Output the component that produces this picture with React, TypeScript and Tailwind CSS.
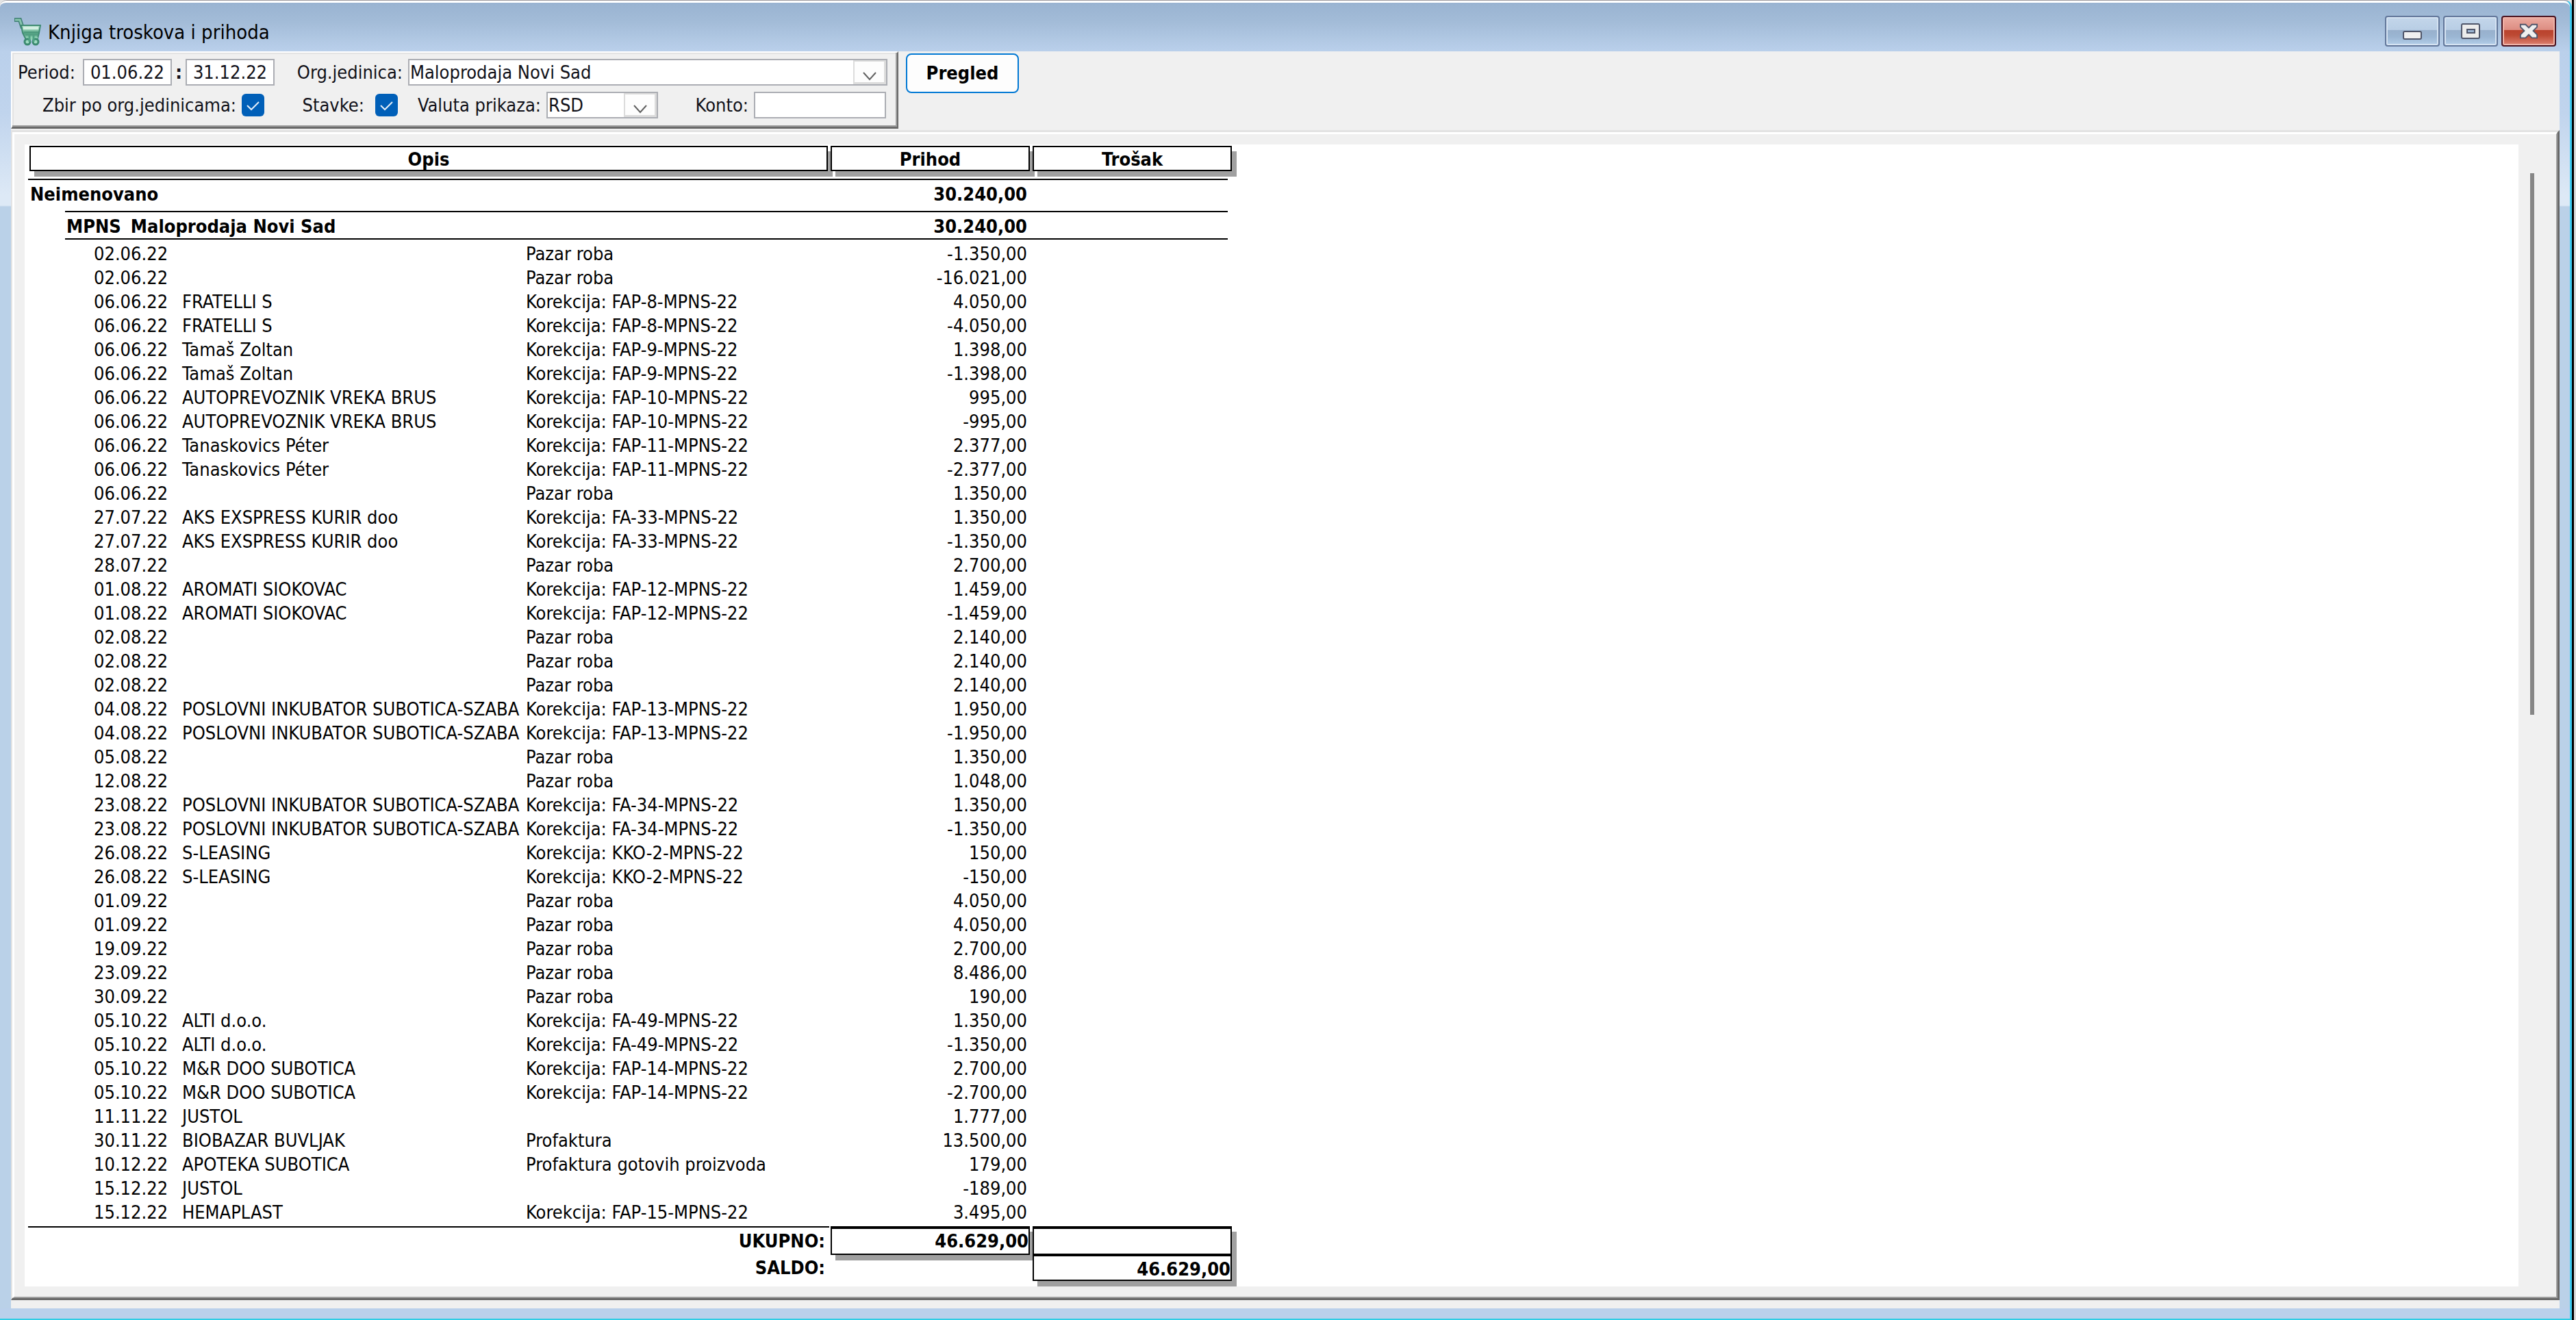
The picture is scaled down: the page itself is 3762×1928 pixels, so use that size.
import { ReactNode } from "react";

type Entry = [date: string, name: string, note: string, income: string];

const entries: Entry[] = [
  ["02.06.22", "", "Pazar roba", "-1.350,00"],
  ["02.06.22", "", "Pazar roba", "-16.021,00"],
  ["06.06.22", "FRATELLI S", "Korekcija: FAP-8-MPNS-22", "4.050,00"],
  ["06.06.22", "FRATELLI S", "Korekcija: FAP-8-MPNS-22", "-4.050,00"],
  ["06.06.22", "Tamaš Zoltan", "Korekcija: FAP-9-MPNS-22", "1.398,00"],
  ["06.06.22", "Tamaš Zoltan", "Korekcija: FAP-9-MPNS-22", "-1.398,00"],
  ["06.06.22", "AUTOPREVOZNIK VREKA BRUS", "Korekcija: FAP-10-MPNS-22", "995,00"],
  ["06.06.22", "AUTOPREVOZNIK VREKA BRUS", "Korekcija: FAP-10-MPNS-22", "-995,00"],
  ["06.06.22", "Tanaskovics Péter", "Korekcija: FAP-11-MPNS-22", "2.377,00"],
  ["06.06.22", "Tanaskovics Péter", "Korekcija: FAP-11-MPNS-22", "-2.377,00"],
  ["06.06.22", "", "Pazar roba", "1.350,00"],
  ["27.07.22", "AKS EXSPRESS KURIR doo", "Korekcija: FA-33-MPNS-22", "1.350,00"],
  ["27.07.22", "AKS EXSPRESS KURIR doo", "Korekcija: FA-33-MPNS-22", "-1.350,00"],
  ["28.07.22", "", "Pazar roba", "2.700,00"],
  ["01.08.22", "AROMATI SIOKOVAC", "Korekcija: FAP-12-MPNS-22", "1.459,00"],
  ["01.08.22", "AROMATI SIOKOVAC", "Korekcija: FAP-12-MPNS-22", "-1.459,00"],
  ["02.08.22", "", "Pazar roba", "2.140,00"],
  ["02.08.22", "", "Pazar roba", "2.140,00"],
  ["02.08.22", "", "Pazar roba", "2.140,00"],
  ["04.08.22", "POSLOVNI INKUBATOR SUBOTICA-SZABA", "Korekcija: FAP-13-MPNS-22", "1.950,00"],
  ["04.08.22", "POSLOVNI INKUBATOR SUBOTICA-SZABA", "Korekcija: FAP-13-MPNS-22", "-1.950,00"],
  ["05.08.22", "", "Pazar roba", "1.350,00"],
  ["12.08.22", "", "Pazar roba", "1.048,00"],
  ["23.08.22", "POSLOVNI INKUBATOR SUBOTICA-SZABA", "Korekcija: FA-34-MPNS-22", "1.350,00"],
  ["23.08.22", "POSLOVNI INKUBATOR SUBOTICA-SZABA", "Korekcija: FA-34-MPNS-22", "-1.350,00"],
  ["26.08.22", "S-LEASING", "Korekcija: KKO-2-MPNS-22", "150,00"],
  ["26.08.22", "S-LEASING", "Korekcija: KKO-2-MPNS-22", "-150,00"],
  ["01.09.22", "", "Pazar roba", "4.050,00"],
  ["01.09.22", "", "Pazar roba", "4.050,00"],
  ["19.09.22", "", "Pazar roba", "2.700,00"],
  ["23.09.22", "", "Pazar roba", "8.486,00"],
  ["30.09.22", "", "Pazar roba", "190,00"],
  ["05.10.22", "ALTI d.o.o.", "Korekcija: FA-49-MPNS-22", "1.350,00"],
  ["05.10.22", "ALTI d.o.o.", "Korekcija: FA-49-MPNS-22", "-1.350,00"],
  ["05.10.22", "M&R DOO SUBOTICA", "Korekcija: FAP-14-MPNS-22", "2.700,00"],
  ["05.10.22", "M&R DOO SUBOTICA", "Korekcija: FAP-14-MPNS-22", "-2.700,00"],
  ["11.11.22", "JUSTOL", "", "1.777,00"],
  ["30.11.22", "BIOBAZAR BUVLJAK", "Profaktura", "13.500,00"],
  ["10.12.22", "APOTEKA SUBOTICA", "Profaktura gotovih proizvoda", "179,00"],
  ["15.12.22", "JUSTOL", "", "-189,00"],
  ["15.12.22", "HEMAPLAST", "Korekcija: FAP-15-MPNS-22", "3.495,00"],
];

function CartIcon() {
  return (
    <svg width="40" height="42" viewBox="0 0 40 42" aria-hidden="true">
      <defs>
        <linearGradient id="cart" x1="0" y1="0" x2="0" y2="1">
          <stop offset="0" stopColor="#b9e3cf" />
          <stop offset="0.35" stopColor="#8cc9ae" />
          <stop offset="0.6" stopColor="#4f9f80" />
          <stop offset="1" stopColor="#93d3b5" />
        </linearGradient>
      </defs>
      <path d="M1 4h8l4 12" fill="none" stroke="#3f7f74" strokeWidth="6" />
      <path d="M2 4h7l4 12" fill="none" stroke="#86c3ac" strokeWidth="3" />
      <path d="M11 12h28l-2 11-2 8H17l-4-8z" fill="url(#cart)" stroke="#3f8a72" strokeWidth="2" />
      <path d="M14 16h22" stroke="#d3efe2" strokeWidth="4" />
      <path d="M15 22h21M17 26h18" stroke="#3f8a70" strokeWidth="1" />
      <path d="M18 29h17v4H18z" fill="#8fd2b3" />
      <circle cx="20" cy="36" r="4" fill="#9fdcc2" stroke="#3b8a70" strokeWidth="3" />
      <circle cx="32" cy="36" r="4" fill="#9fdcc2" stroke="#3b8a70" strokeWidth="3" />
      <path d="M23 27v9M29 27v9" stroke="#4fa283" strokeWidth="3" />
    </svg>
  );
}

const captionBlue =
  "flex h-[45px] w-20 items-center justify-center rounded-[4px] border-2 border-[#62779a] bg-[linear-gradient(#c3d6ea_0%,#b9cee5_45%,#98b0cc_46%,#9bb6d3_70%,#b3cee9_100%)] shadow-[inset_0_0_0_2px_#d5e3f2]";

function CaptionButtons() {
  return (
    <div className="flex gap-[5px]">
      <button type="button" aria-label="Minimize" className={captionBlue}>
        <svg width="28" height="26" viewBox="0 0 28 26">
          <rect x="1" y="13" width="26" height="11" rx="2" fill="#f0f0f0" stroke="#50566a" strokeWidth="2" />
        </svg>
      </button>
      <button type="button" aria-label="Maximize" className={captionBlue}>
        <svg width="28" height="26" viewBox="0 0 28 26">
          <rect x="1" y="2" width="26" height="21" rx="2" fill="#ececec" stroke="#50566a" strokeWidth="2" />
          <rect x="9" y="10" width="11" height="5" fill="#9bb4d2" stroke="#50566a" strokeWidth="2" />
        </svg>
      </button>
      <button
        type="button"
        aria-label="Close"
        className="flex h-[45px] w-20 items-center justify-center rounded-[4px] border-2 border-[#4a1320] bg-[linear-gradient(#ebaba1_0%,#dd8d82_45%,#b9412c_46%,#bd4a34_65%,#dd8272_100%)] shadow-[inset_0_0_0_2px_#eeb3a8]"
      >
        <svg width="28" height="26" viewBox="0 0 30 26">
          <path
            d="M2 2h8l5 5 5-5h8v4l-6 6 6 6v5h-8l-5-5-5 5H2v-5l6-6-6-6z"
            fill="#efefef"
            stroke="#50566a"
            strokeWidth="2"
          />
        </svg>
      </button>
    </div>
  );
}

function Combo({ id, value, className }: { id: string; value: string; className: string }) {
  return (
    <div className={`relative h-[39px] ${className}`}>
      <select
        id={id}
        className="h-full w-full appearance-none border-2 border-[#abadb3] bg-white pl-px leading-8"
        defaultValue={value}
      >
        <option>{value}</option>
      </select>
      <span className="pointer-events-none absolute inset-y-[2px] right-[2px] flex w-12 items-end justify-center border-2 border-r-[3px] border-b-[3px] border-[#dcdcdc] bg-[#fdfdfd] pb-[2px]">
        <svg width="20" height="13" viewBox="0 0 20 13" fill="none" stroke="#606060" strokeWidth="2">
          <path d="M1 1l9 10 9-10" />
        </svg>
      </span>
    </div>
  );
}

function Tick({ id }: { id: string }) {
  return (
    <span className="relative h-[33px] w-[33px]">
      <input id={id} type="checkbox" defaultChecked className="block h-full w-full appearance-none rounded-[6px] bg-[#005fb8]" />
      <svg
        className="pointer-events-none absolute inset-0"
        width="33"
        height="33"
        viewBox="0 0 33 33"
        fill="none"
        stroke="#e4eef8"
        strokeWidth="2"
      >
        <path d="M8 17l6 6L25 12" />
      </svg>
    </span>
  );
}

const field = "h-[39px] border-2 border-[#abadb3] bg-white";

function Filters() {
  return (
    <form className="flex w-[1296px] flex-col gap-[9px] border-t-2 border-r-2 border-b-[3px] border-l-2 border-t-white border-r-[#696969] border-b-[#696969] border-l-white pt-[9px] pb-3 pl-2 text-[#101018] shadow-[inset_-2px_-2px_0_#a0a0a0,inset_2px_2px_0_#e3e3e3]">
      <div className="flex items-center">
        <label htmlFor="from" className="w-[95px]">
          Period:
        </label>
        <input id="from" defaultValue="01.06.22" className={`${field} w-[130px] text-center`} />
        <label htmlFor="to" aria-label="Period do" className="w-5 text-center font-bold">
          :
        </label>
        <input id="to" defaultValue="31.12.22" className={`${field} w-[130px] text-center`} />
        <label htmlFor="unit" className="w-[195px] pr-2 text-right">
          Org.jedinica:
        </label>
        <Combo id="unit" value="Maloprodaja Novi Sad" className="w-[700px]" />
      </div>
      <div className="flex items-center">
        <label htmlFor="sum" className="w-[327px] pr-2 text-right">
          Zbir po org.jedinicama:
        </label>
        <Tick id="sum" />
        <label htmlFor="items" className="w-[162px] pr-4 text-right">
          Stavke:
        </label>
        <Tick id="items" />
        <label htmlFor="currency" className="w-[217px] pr-2 text-right">
          Valuta prikaza:
        </label>
        <Combo id="currency" value="RSD" className="w-[163px]" />
        <label htmlFor="account" className="w-[140px] pr-2 text-right">
          Konto:
        </label>
        <input id="account" className={`${field} w-[193px]`} />
      </div>
    </form>
  );
}

function Box({ children, className = "" }: { children?: ReactNode; className?: string }) {
  return (
    <div className={`mx-[2px] border-2 border-black bg-white shadow-[7px_8px_0_#a0a0a0] ${className}`}>{children}</div>
  );
}

function Ledger() {
  return (
    <table className="w-[1760px] table-fixed border-collapse text-left text-black">
      <colgroup>
        <col className="w-[225px]" />
        <col className="w-[502px]" />
        <col className="w-[443px]" />
        <col className="w-[295px]" />
        <col className="w-[295px]" />
      </colgroup>
      <thead>
        <tr className="h-[50px] align-top">
          <th colSpan={3} className="pt-[2px] text-center">
            <Box className="h-[37px] leading-9">Opis</Box>
          </th>
          <th className="pt-[2px] text-center">
            <Box className="h-[37px] leading-9">Prihod</Box>
          </th>
          <th className="pt-[2px] text-center">
            <Box className="h-[37px] leading-9">Trošak</Box>
          </th>
        </tr>
      </thead>
      <tbody>
        <tr className="h-[47px] align-top font-bold">
          <td colSpan={3}>
            <div className="h-[47px] border-t-2 border-black pl-[3px] leading-[42px]">Neimenovano</div>
          </td>
          <td>
            <div className="h-[47px] border-t-2 border-black pr-[6px] text-right leading-[42px]">30.240,00</div>
          </td>
          <td>
            <div className="mr-2 h-[47px] border-t-2 border-black" />
          </td>
        </tr>
        <tr className="h-[45px] align-top font-bold">
          <td colSpan={3}>
            <div className="ml-[54px] flex h-[42px] gap-[14px] border-y-2 border-black pl-[2px] leading-[41px]">
              <span>MPNS</span>
              <span>Maloprodaja Novi Sad</span>
            </div>
          </td>
          <td>
            <div className="h-[42px] border-y-2 border-black pr-[6px] text-right leading-[41px]">30.240,00</div>
          </td>
          <td>
            <div className="mr-2 h-[42px] border-y-2 border-black" />
          </td>
        </tr>
        {entries.map(([date, name, note, income], i) => (
          <tr key={i} className="h-[35px] leading-[35px]">
            <td className="pl-24">{date}</td>
            <td className="whitespace-nowrap">{name}</td>
            <td className="whitespace-nowrap">{note}</td>
            <td className="pr-[6px] text-right">{income}</td>
            <td />
          </tr>
        ))}
      </tbody>
      <tfoot className="font-bold">
        <tr className="h-11 align-top">
          <td colSpan={3} className="pt-[3px]">
            <div className="border-t-2 border-black pr-[6px] text-right leading-[40px]">UKUPNO:</div>
          </td>
          <td className="pt-[3px] text-right">
            <Box className="h-[42px] border-t-4 leading-[36px]">46.629,00</Box>
          </td>
          <td className="pt-[3px]">
            <Box className="h-[42px] border-t-4" />
          </td>
        </tr>
        <tr className="h-[46px] align-top">
          <td colSpan={3} className="pr-[6px] text-right leading-[37px]">
            SALDO:
          </td>
          <td />
          <td className="text-right">
            <Box className="h-[38px] leading-[38px]">46.629,00</Box>
          </td>
        </tr>
      </tfoot>
    </table>
  );
}

const sideGlass = "bg-[linear-gradient(#bad0eb_0px,#c0d4ed_90px,#dde9f6_210px,#dde9f6_225px,#bad1e8_227px)]";

export default function App() {
  return (
    <div className="flex min-h-screen w-full bg-[#e4e4e4] font-['DejaVu_Sans_Condensed','Noto_Sans',sans-serif] text-[27px] leading-8">
      <div className="flex min-w-0 flex-1 flex-col rounded-t-[10px] border-t border-r-[3px] border-b-2 border-t-[#9a979b] border-r-[#3fc9ee] border-b-[#2fcde4] bg-[#bad0eb] pb-[15px]">
        <header className="flex h-[74px] items-start justify-between rounded-t-[9px] border-t-[3px] border-white bg-[linear-gradient(#99b3d1,#a3bcd8_40%,#bad0eb)] pt-[19px] pr-5 pl-5">
          <div className="flex items-start gap-[10px] pt-[2px]">
            <CartIcon />
            <h1 className="pt-[6px] text-[29px] text-black">Knjiga troskova i prihoda</h1>
          </div>
          <CaptionButtons />
        </header>
        <div className="flex flex-1">
          <div className={`w-4 ${sideGlass}`} />
          <main className="flex min-w-0 flex-1 flex-col bg-[#f0f0f0] pb-3">
            <div className="flex items-start gap-[11px] pb-[2px]">
              <Filters />
              <button
                type="button"
                className="mt-[3px] h-[58px] w-[165px] rounded-[8px] border-2 border-[#0078d4] bg-[#fdfdfd] font-bold text-black"
              >
                Pregled
              </button>
            </div>
            <section className="flex flex-1 border-t-[3px] border-r-[3px] border-b-[3px] border-l-2 border-t-[#e3e3e3] border-r-[#696969] border-b-[#696969] border-l-[#e3e3e3]">
              <div className="flex flex-1 border-t-[3px] border-r-2 border-b-2 border-l-[3px] border-t-white border-r-[#a0a0a0] border-b-[#a0a0a0] border-l-white pt-[15px] pb-[15px] pl-[15px]">
                <div className="flex-1 bg-white pl-[5px]">
                  <Ledger />
                </div>
                <div className="w-[55px] pt-[42px] pl-[17px]">
                  <div className="h-[791px] w-[6px] bg-[#868686]" />
                </div>
              </div>
            </section>
          </main>
          <div className={`w-[15px] ${sideGlass}`} />
        </div>
      </div>
      <div className="w-[6px] border-l-[3px] border-black bg-[#dcdcdc]" />
    </div>
  );
}
